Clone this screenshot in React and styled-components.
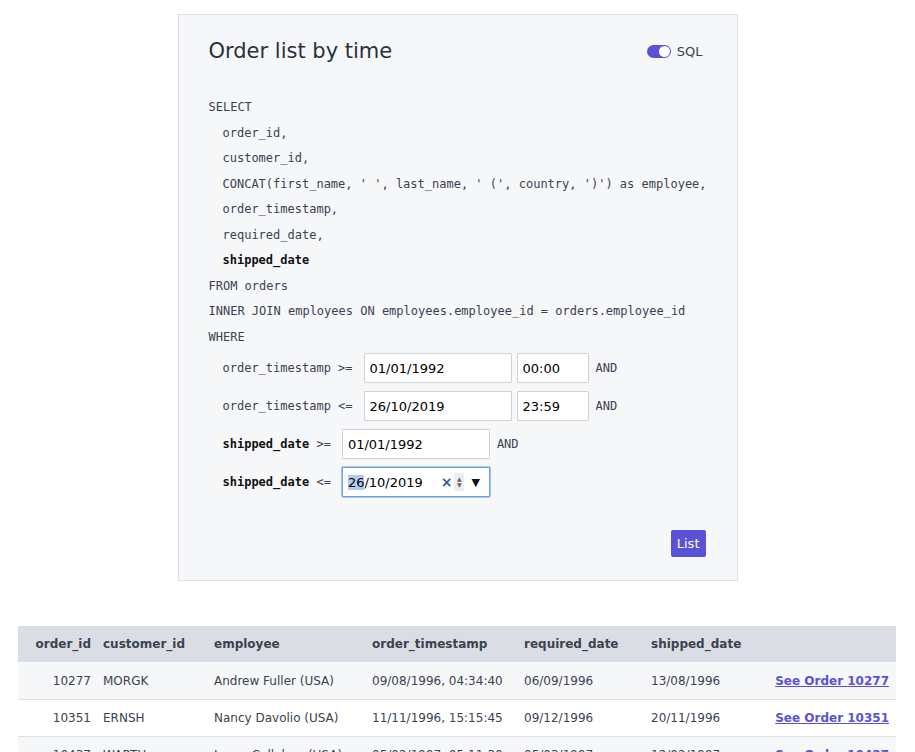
import React from "react";
import styled, { createGlobalStyle } from "styled-components";

const GlobalStyle = createGlobalStyle`
  body {
    margin: 0;
    background: #ffffff;
    font-family: "DejaVu Sans", sans-serif;
    color: #374151;
  }
`;

const Page = styled.div`
  padding-top: 14px;
  padding-bottom: 40px;
`;

const Card = styled.div`
  width: 560px;
  box-sizing: border-box;
  margin: 0 auto;
  background: #f6f7f9;
  border: 1px solid #dcdfe4;
  padding: 23px 30px 23px 30px;
`;

const Header = styled.div`
  display: flex;
  align-items: center;
  justify-content: space-between;
  height: 26px;
  padding-right: 4px;
`;

const Title = styled.h1`
  margin: 0;
  font-size: 21px;
  font-weight: normal;
  color: #2b303a;
  line-height: 26px;
`;

const Toggle = styled.label`
  display: flex;
  align-items: center;
  gap: 6px;
  font-size: 13px;
  color: #374151;
`;

const Track = styled.span`
  position: relative;
  width: 24px;
  height: 13px;
  border-radius: 7px;
  background: ${(p) => (p.$on ? "#5a52d6" : "#c7cad1")};
  &::after {
    content: "";
    position: absolute;
    top: 1px;
    left: ${(p) => (p.$on ? "12px" : "1px")};
    width: 11px;
    height: 11px;
    border-radius: 50%;
    background: #fff;
  }
`;

const Code = styled.div`
  margin-top: 31px;
  font-family: "DejaVu Sans Mono", monospace;
  font-size: 12px;
  color: #3b4250;
`;

const Line = styled.div`
  line-height: 25.5px;
  padding-left: ${(p) => (p.$indent ? "14px" : "0")};
  font-weight: ${(p) => (p.$bold ? "bold" : "normal")};
  color: ${(p) => (p.$bold ? "#111" : "inherit")};
  white-space: pre;
`;

const Conditions = styled.div`
  margin-top: -1px;
`;

const Cond = styled.div`
  display: flex;
  align-items: center;
  height: 38px;
  padding-left: 14px;
`;

const Label = styled.span`
  margin-right: 11px;
  white-space: pre;
`;

const Col = styled.b`
  color: #111;
`;

const Field = styled.input`
  box-sizing: border-box;
  width: ${(p) => p.$w}px;
  height: 30px;
  margin-right: 5px;
  border: 1px solid #cfd2d7;
  border-radius: 1px;
  background: #fff;
  padding: 0 5px;
  font-family: "DejaVu Sans", sans-serif;
  font-size: 13px;
  color: #000;
  outline: none;
`;

const FocusedField = styled.div`
  box-sizing: border-box;
  width: 148px;
  height: 30px;
  margin-right: 5px;
  border: 1px solid #6e9fdc;
  box-shadow: 0 0 0 1px #a9c7ee;
  border-radius: 1px;
  background: #fff;
  padding: 0 5px;
  display: flex;
  align-items: center;
  font-family: "DejaVu Sans", sans-serif;
  font-size: 13px;
  color: #000;
`;

const Selected = styled.span`
  background: #b3cdf2;
`;

const Controls = styled.span`
  margin-left: auto;
  display: flex;
  align-items: center;
  gap: 2px;
`;

const Clear = styled.span`
  color: #3c5d92;
  font-weight: bold;
  font-size: 14px;
`;

const Spin = styled.span`
  display: flex;
  flex-direction: column;
  align-items: center;
  justify-content: center;
  width: 10px;
  height: 18px;
  background: #eeeeee;
  font-size: 6px;
  line-height: 6px;
  color: #666;
`;

const Drop = styled.span`
  font-size: 11px;
  margin-left: 5px;
  margin-right: 4px;
  color: #111;
`;

const And = styled.span`
  margin-left: 2px;
`;

const Actions = styled.div`
  display: flex;
  justify-content: flex-end;
  margin-top: 29px;
  padding-right: 1px;
`;

const Button = styled.button`
  height: 27px;
  padding: 0 6px;
  border: none;
  border-radius: 2px;
  background: #5a52d6;
  color: #fff;
  font-family: "DejaVu Sans", sans-serif;
  font-size: 13px;
`;

const TableWrap = styled.div`
  margin: 45px 19px 0 18px;
`;

const Table = styled.table`
  width: 100%;
  table-layout: fixed;
  border-collapse: collapse;
  font-size: 12px;
  color: #3b4250;
`;

const Th = styled.th`
  height: 36px;
  background: #dadde3;
  font-weight: bold;
  font-size: 12px;
  text-align: ${(p) => p.$align || "left"};
  padding: 0 6px;
  white-space: nowrap;
`;

const Tr = styled.tr`
  background: ${(p) => (p.$alt ? "#f6f7f9" : "#ffffff")};
  border-bottom: 1px solid #dcdfe4;
`;

const Td = styled.td`
  height: 37px;
  box-sizing: border-box;
  text-align: ${(p) => p.$align || "left"};
  padding: 1px ${(p) => (p.$last ? "7px" : "6px")} 0;
  white-space: nowrap;
`;

const OrderLink = styled.a`
  color: #5a52d6;
  font-weight: bold;
  text-decoration: underline;
`;

const orders = [
  ["10277", "MORGK", "Andrew Fuller (USA)", "09/08/1996, 04:34:40", "06/09/1996", "13/08/1996"],
  ["10351", "ERNSH", "Nancy Davolio (USA)", "11/11/1996, 15:15:45", "09/12/1996", "20/11/1996"],
  ["10437", "WARTH", "Laura Callahan (USA)", "05/02/1997, 05:11:30", "05/03/1997", "12/02/1997"],
];

export default function App() {
  return (
    <Page>
      <GlobalStyle />
      <Card>
        <Header>
          <Title>Order list by time</Title>
          <Toggle>
            <Track $on />
            SQL
          </Toggle>
        </Header>
        <Code>
          <Line>SELECT</Line>
          <Line $indent>order_id,</Line>
          <Line $indent>customer_id,</Line>
          <Line $indent>CONCAT(first_name, ' ', last_name, ' (', country, ')') as employee,</Line>
          <Line $indent>order_timestamp,</Line>
          <Line $indent>required_date,</Line>
          <Line $indent $bold>shipped_date</Line>
          <Line>FROM orders</Line>
          <Line>INNER JOIN employees ON employees.employee_id = orders.employee_id</Line>
          <Line>WHERE</Line>
          <Conditions>
            <Cond>
              <Label>order_timestamp &gt;=</Label>
              <Field $w={148} defaultValue="01/01/1992" />
              <Field $w={72} defaultValue="00:00" />
              <And>AND</And>
            </Cond>
            <Cond>
              <Label>order_timestamp &lt;=</Label>
              <Field $w={148} defaultValue="26/10/2019" />
              <Field $w={72} defaultValue="23:59" />
              <And>AND</And>
            </Cond>
            <Cond>
              <Label>
                <Col>shipped_date</Col> &gt;=
              </Label>
              <Field $w={148} defaultValue="01/01/1992" />
              <And>AND</And>
            </Cond>
            <Cond>
              <Label>
                <Col>shipped_date</Col> &lt;=
              </Label>
              <FocusedField>
                <Selected>26</Selected>/10/2019
                <Controls>
                  <Clear>×</Clear>
                  <Spin>
                    <span>▲</span>
                    <span>▼</span>
                  </Spin>
                  <Drop>▼</Drop>
                </Controls>
              </FocusedField>
            </Cond>
          </Conditions>
        </Code>
        <Actions>
          <Button>List</Button>
        </Actions>
      </Card>
      <TableWrap>
        <Table>
          <colgroup>
            <col style={{ width: 79 }} />
            <col style={{ width: 111 }} />
            <col style={{ width: 158 }} />
            <col style={{ width: 152 }} />
            <col style={{ width: 127 }} />
            <col style={{ width: 120 }} />
            <col style={{ width: 131 }} />
          </colgroup>
          <thead>
            <tr>
              <Th $align="right">order_id</Th>
              <Th>customer_id</Th>
              <Th>employee</Th>
              <Th>order_timestamp</Th>
              <Th>required_date</Th>
              <Th>shipped_date</Th>
              <Th />
            </tr>
          </thead>
          <tbody>
            {orders.map((o, i) => (
              <Tr key={o[0]} $alt={i % 2 === 0}>
                <Td $align="right">{o[0]}</Td>
                <Td>{o[1]}</Td>
                <Td>{o[2]}</Td>
                <Td>{o[3]}</Td>
                <Td>{o[4]}</Td>
                <Td>{o[5]}</Td>
                <Td $align="right" $last>
                  <OrderLink href="#">See Order {o[0]}</OrderLink>
                </Td>
              </Tr>
            ))}
          </tbody>
        </Table>
      </TableWrap>
    </Page>
  );
}
